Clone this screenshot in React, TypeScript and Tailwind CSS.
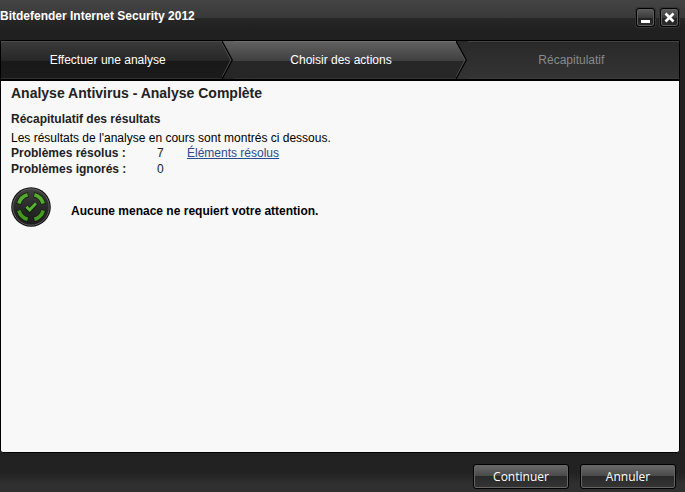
interface IStepDividerProps {
  left: string[];
  right: string[];
  id: string;
}

interface IResultRow {
  label: string;
  count: number;
  link?: string;
}

const results: IResultRow[] = [
  { label: "Problèmes résolus :", count: 7, link: "Éléments résolus" },
  { label: "Problèmes ignorés :", count: 0 },
];

const DONE = ["#3b3b3b", "#262626", "#181818", "#1b1b1b"];
const ACTIVE = ["#626262", "#3f3f3f", "#272727", "#262626"];
const NEXT = ["#292929", "#2e2e2e", "#2e2e2e", "#343434"];

const GradientStops = ({ colors }: { colors: string[] }) => (
  <>
    <stop offset="0" stopColor={colors[0]} />
    <stop offset="0.53" stopColor={colors[1]} />
    <stop offset="0.53" stopColor={colors[2]} />
    <stop offset="1" stopColor={colors[3]} />
  </>
);

const StepDivider = ({ left, right, id }: IStepDividerProps) => (
  <svg
    className="h-full w-full"
    viewBox="0 0 12 38"
    preserveAspectRatio="none"
    aria-hidden="true"
  >
    <defs>
      <linearGradient id={`${id}-l`} x1="0" y1="0" x2="0" y2="38" gradientUnits="userSpaceOnUse">
        <GradientStops colors={left} />
      </linearGradient>
      <linearGradient id={`${id}-r`} x1="0" y1="0" x2="0" y2="38" gradientUnits="userSpaceOnUse">
        <GradientStops colors={right} />
      </linearGradient>
    </defs>
    <rect width="12" height="38" fill={`url(#${id}-r)`} />
    <path d="M0 0 L10 19 L0 38 Z" fill={`url(#${id}-l)`} />
    <path d="M-1 0 L9 19 L-1 38" fill="none" stroke="#555" strokeWidth="1" />
    <path d="M0 0 L10.3 19 L0 38" fill="none" stroke="#000" strokeWidth="1.2" />
  </svg>
);

const StatusIcon = () => (
  <svg className="size-10 shrink-0" viewBox="0 0 40 40" aria-hidden="true">
    <defs>
      <linearGradient id="disc" x1="0" y1="0" x2="0" y2="1">
        <stop offset="0" stopColor="#424242" />
        <stop offset="0.5" stopColor="#2a2a2a" />
        <stop offset="1" stopColor="#1c1c1c" />
      </linearGradient>
    </defs>
    <circle cx="20" cy="20" r="19.8" fill="#111" />
    <circle cx="20" cy="20" r="18.2" fill="url(#disc)" stroke="#686868" strokeWidth="0.9" />
    <g fill="none" stroke="#14230c" strokeWidth="5.2">
      <path d="M7.6 17.2 A12.7 12.7 0 0 1 17.2 7.6" />
      <path d="M22.8 7.6 A12.7 12.7 0 0 1 32.4 17.2" />
      <path d="M32.4 22.8 A12.7 12.7 0 0 1 22.8 32.4" />
      <path d="M17.2 32.4 A12.7 12.7 0 0 1 7.6 22.8" />
    </g>
    <g fill="none" stroke="#55ab30" strokeWidth="3.6">
      <path d="M7.8 16.6 A12.7 12.7 0 0 1 16.6 7.8" />
      <path d="M23.4 7.8 A12.7 12.7 0 0 1 32.2 16.6" />
      <path d="M32.2 23.4 A12.7 12.7 0 0 1 23.4 32.2" stroke="#459a24" />
      <path d="M16.6 32.2 A12.7 12.7 0 0 1 7.8 23.4" stroke="#459a24" />
    </g>
    <path d="M14.8 20 L18.6 23.6 L25.4 16" fill="none" stroke="#14230c" strokeWidth="4.6" />
    <path d="M15.4 19.8 L18.6 22.9 L25 16.2" fill="none" stroke="#58b330" strokeWidth="2.8" />
  </svg>
);

const WindowButton = ({
  label,
  children,
}: {
  label: string;
  children: React.ReactNode;
}) => (
  <button
    type="button"
    aria-label={label}
    className="size-[19px] rounded-[3px] border border-black bg-[linear-gradient(#5c5c5c,#3c3c3c_50%,#222_50%,#2c2c2c)] shadow-[inset_0_0_0_1px_#5e5e5e,0_0_0_1px_#343434]"
  >
    <svg className="size-[17px]" viewBox="0 0 17 17" aria-hidden="true">
      {children}
    </svg>
  </button>
);

const FooterButton = ({ label }: { label: string }) => (
  <button
    type="button"
    className="h-[25px] w-24 rounded-[3px] border border-black bg-[linear-gradient(#6a6a6a,#484848_50%,#2a2a2a_50%,#343434)] font-['Open_Sans',sans-serif] text-xs text-white shadow-[inset_0_0_0_1px_#656565]"
  >
    {label}
  </button>
);

const App = () => {
  return (
    <div className="flex min-h-screen flex-col bg-[#222] font-['Liberation_Sans',Arial,sans-serif] text-xs text-[#222]">
      <header className="flex h-10 shrink-0 justify-between bg-[linear-gradient(#444,#393939_18px,#272727_18px,#202020_30px)] pr-1.5">
        <h1 className="pt-2 font-bold text-white">
          Bitdefender Internet Security 2012
        </h1>
        <div className="flex gap-[5px] pt-2">
          <WindowButton label="Réduire">
            <path d="M4 11 H13 V14 H4 Z" fill="#fff" />
          </WindowButton>
          <WindowButton label="Fermer">
            <path
              d="M4.5 4.5 L12.5 12.5 M12.5 4.5 L4.5 12.5"
              stroke="#fff"
              strokeWidth="2.6"
            />
          </WindowButton>
        </div>
      </header>

      <main className="mr-[5px] flex grow flex-col rounded-b-[3px] border border-black bg-[#f8f8f8]">
        <ol className="grid h-10 shrink-0 grid-cols-[22fr_12px_22fr_12px_21fr] border-b-2 border-black text-center leading-[38px] text-white">
          <li className="bg-[linear-gradient(#3b3b3b,#262626_53%,#181818_53%,#1b1b1b)] pr-2 shadow-[inset_0_1px_#4c4c4c,inset_0_-1px_#303030]">
            Effectuer une analyse
          </li>
          <li aria-hidden="true">
            <StepDivider id="done" left={DONE} right={ACTIVE} />
          </li>
          <li
            aria-current="step"
            className="bg-[linear-gradient(#626262,#3f3f3f_53%,#272727_53%,#262626)] pr-2 shadow-[inset_0_1px_#707070,inset_0_-1px_#343434]"
          >
            Choisir des actions
          </li>
          <li aria-hidden="true">
            <StepDivider id="active" left={ACTIVE} right={NEXT} />
          </li>
          <li className="bg-[linear-gradient(#292929,#343434)] pr-1 text-[#8a8a8a] shadow-[inset_0_1px_#444,inset_0_-1px_#3c3c3c]">
            Récapitulatif
          </li>
        </ol>

        <div className="px-2.5 pt-1">
          <h2 className="text-sm leading-4 font-bold">
            Analyse Antivirus - Analyse Complète
          </h2>
          <h3 className="mt-2.5 leading-4 font-bold">
            Récapitulatif des résultats
          </h3>
          <p className="mt-1 leading-[14px] text-black">
            Les résultats de l'analyse en cours sont montrés ci dessous.
          </p>
          <table className="text-left leading-4">
            <tbody>
              {results.map((row) => (
                <tr key={row.label}>
                  <th scope="row" className="w-[146px] p-0 font-bold">
                    {row.label}
                  </th>
                  <td className="w-[30px] p-0">{row.count}</td>
                  <td className="p-0">
                    {row.link && (
                      <a href="#" className="text-[#2b4a8b] underline">
                        {row.link}
                      </a>
                    )}
                  </td>
                </tr>
              ))}
            </tbody>
          </table>
          <div className="mt-2.5 flex gap-5">
            <StatusIcon />
            <p className="pt-4 leading-4 font-bold text-black">
              Aucune menace ne requiert votre attention.
            </p>
          </div>
        </div>
      </main>

      <footer className="flex h-[39px] shrink-0 justify-end gap-[11px] bg-[linear-gradient(#212121,#222_50%,#303030_80%)] pt-[11px] pr-[9px]">
        <FooterButton label="Continuer" />
        <FooterButton label="Annuler" />
      </footer>
    </div>
  );
};

export default App;
